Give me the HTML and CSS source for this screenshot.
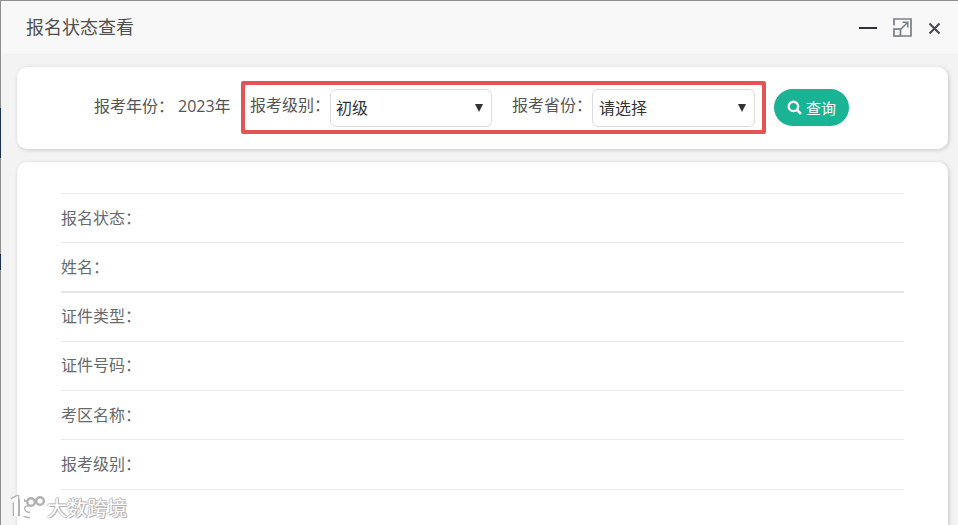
FILE: index.html
```html
<!DOCTYPE html>
<html lang="zh">
<head>
<meta charset="utf-8">
<title>报名状态查看</title>
<link rel="stylesheet" href="styles.css">
</head>
<body>
<div class="edge"><span class="edge-mark edge-a"></span><span class="edge-mark edge-b"></span></div>
<div class="dialog">
  <header class="titlebar">
    <h1 class="title">报名状态查看</h1>
    <div class="tools">
      <span class="min"></span>
      <svg class="icon-max" width="19" height="19" viewBox="0 0 19 19" fill="none"><path d="M1 7.5V1H18V18H7.5" stroke="#7b7f86" stroke-width="1.7"/><rect x="1" y="11" width="6.5" height="7" stroke="#7b7f86" stroke-width="1.7"/><path d="M8 11L14.5 4.5M9.5 4.2H14.8V9.5" stroke="#7b7f86" stroke-width="1.5"/></svg>
      <svg class="icon-close" width="13" height="13" viewBox="0 0 13 13" fill="none"><path d="M1.5 1.5L11.5 11.5M11.5 1.5L1.5 11.5" stroke="#454850" stroke-width="2"/></svg>
    </div>
  </header>
  <main class="content">
    <section class="card search">
      <span class="label">报考年份：</span><span class="label year">2023年</span>
      <div class="highlight">
        <span class="label">报考级别：</span>
        <div class="select sel-a"><span>初级</span><i class="arrow"></i></div>
        <span class="label label-b">报考省份：</span>
        <div class="select sel-b"><span>请选择</span><i class="arrow"></i></div>
      </div>
      <button class="btn" type="button"><svg width="15" height="15" viewBox="0 0 14 14" fill="none"><circle cx="6" cy="6" r="4.4" stroke="#fff" stroke-width="2.2"/><path d="M9.2 9.2L13 13" stroke="#fff" stroke-width="2.4"/></svg><span class="btn-text">查询</span></button>
    </section>
    <section class="card details">
      <div class="row">报名状态：</div>
      <div class="row">姓名：</div>
      <div class="row">证件类型：</div>
      <div class="row">证件号码：</div>
      <div class="row">考区名称：</div>
      <div class="row">报考级别：</div>
    </section>
  </main>
</div>
<div class="watermark">
  <svg width="36" height="24" viewBox="0 0 36 24" fill="none"><path d="M3 6L7 4V21M13 4V21M21 8C15 8 13 10 13 13C13 17 16 20 21 20" stroke="#a8a8a8" stroke-width="6.5"/><path d="M3 6L7 4V21M13 4V21M21 8C15 8 13 10 13 13C13 17 16 20 21 20" stroke="#fff" stroke-width="4"/><circle cx="22" cy="7" r="3.8" fill="#fff" stroke="#a8a8a8" stroke-width="2.4"/><circle cx="31" cy="6" r="3.8" fill="#fff" stroke="#a8a8a8" stroke-width="2.4"/></svg>
  <span>大数跨境</span>
</div>
</body>
</html>
```
FILE: styles.css
```css
* { box-sizing: border-box; }
html, body { margin: 0; height: 100%; }
body {
  position: relative;
  width: 958px;
  height: 525px;
  overflow: hidden;
  background: #8f8f8f;
  font-family: "Open Sans", "Liberation Sans", "Noto Sans CJK SC", sans-serif;
  color: #676a6c;
}
.edge { position: absolute; left: 0; top: 0; width: 1px; height: 525px; }
.edge-mark { position: absolute; left: 0; width: 1px; background: #17314f; }
.edge-a { top: 108px; height: 50px; }
.edge-b { top: 254px; height: 16px; }
.dialog {
  position: absolute;
  left: 1px;
  top: 1px;
  width: 957px;
  height: 524px;
  background: #f3f3f3;
  overflow: hidden;
}
.titlebar {
  display: flex;
  align-items: center;
  justify-content: space-between;
  height: 53px;
  background: #f8f8f8;
  padding: 0 17px 0 25px;
}
.title { margin: 0 0 2px; font-size: 18px; font-weight: 400; color: #4f4f4f; line-height: 24px; }
.tools { display: flex; align-items: center; }
.min { width: 18px; height: 2px; background: #30323a; margin-right: 16px; margin-top: 1px; }
.icon-max { margin-right: 16px; }
.icon-close { margin-top: 1px; }
.content { display: flex; flex-direction: column; gap: 13px; padding: 13px 10px 0 16px; }
.card { background: #fff; border-radius: 10px; box-shadow: 1px 1px 4px rgba(0,0,0,.18); }
.search {
  display: flex;
  align-items: center;
  height: 82px;
  padding-left: 77px;
  font-size: 16px;
  color: #555;
}
.label { white-space: nowrap; margin-bottom: 7px; }
.year { margin-left: 4px; width: 63px; flex: none; }
.highlight {
  display: flex;
  align-items: center;
  flex: none;
  width: 525px;
  height: 53px;
  margin-bottom: 2px;
  border: 4px solid #e35555;
  border-radius: 2px;
  padding-left: 5px;
}
.select {
  display: flex;
  align-items: center;
  justify-content: space-between;
  flex: none;
  height: 38px;
  margin-top: 1px;
  padding: 0 8px 0 5px;
  background: #fff;
  border: 1px solid #dcdcdc;
  border-radius: 6px;
  color: #333;
}
.select span { margin-bottom: 2px; }
.sel-a { width: 162px; }
.sel-b { width: 163px; padding-left: 6px; }
.label-b { margin-left: 20px; }
.arrow { width: 0; height: 0; border-left: 4px solid transparent; border-right: 4px solid transparent; border-top: 8px solid #333; }
.btn {
  display: flex;
  align-items: center;
  justify-content: center;
  gap: 4px;
  flex: none;
  width: 75px;
  height: 37px;
  margin-left: 8px;
  margin-bottom: 1px;
  border: 0;
  border-radius: 19px;
  background: #1ab394;
  color: #fff;
  font: inherit;
  font-size: 15px;
  padding: 0;
}
.details { height: 400px; padding: 31px 44px 0; }
.row {
  display: flex;
  align-items: center;
  height: 49px;
  padding-bottom: 2px;
  border-top: 1px solid #e7eaec;
  font-size: 16px;
  color: #676a6c;
}
.row:nth-child(3) { height: 50px; padding-bottom: 4px; border-top: 2px solid #e3e5e7; }
.row:nth-child(4) { padding-bottom: 4px; }
.row:last-child { height: 51px; padding-bottom: 3px; border-bottom: 1px solid #e7eaec; }
.watermark {
  position: absolute;
  left: 9px;
  top: 495px;
  display: flex;
  align-items: center;
  height: 24px;
  color: #fff;
  font-size: 20px;
  text-shadow: 1px 1px 0 #aaa, -1px 0 0 #bbb, 0 -1px 0 #bbb, 1px -1px 0 #bbb;
  opacity: .9;
}
.watermark span { margin-left: 2px; }
```
